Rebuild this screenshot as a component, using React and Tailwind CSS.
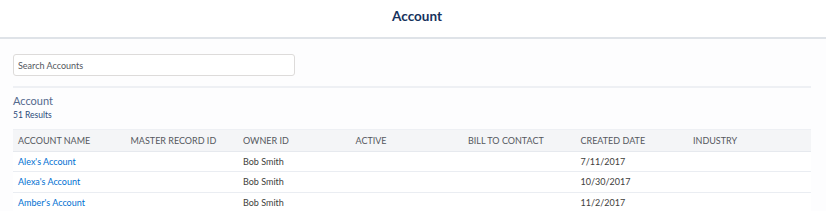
const App = () => {
  const columns = ['Account Name', 'Master Record ID', 'Owner ID', 'Active', 'Bill To Contact', 'Created Date', 'Industry'];

  const rows = [
    { id: 1, name: "Alex's Account", owner: 'Bob Smith', created: '7/11/2017' },
    { id: 2, name: "Alexa's Account", owner: 'Bob Smith', created: '10/30/2017' },
    { id: 3, name: "Amber's Account", owner: 'Bob Smith', created: '11/2/2017' },
  ];

  return (
    <div className="w-[826px] h-[211px] overflow-hidden bg-[#fdfdfe]" style={{ fontFamily: 'Lato, "Open Sans", sans-serif' }}>
      {/* page header */}
      <div className="h-[39px] bg-white border-b-2 border-[#dfe3e8] flex items-center justify-center pl-[8px]">
        <h1 className="text-[13.5px] font-bold text-[#16325c] -mt-[4px]">Account</h1>
      </div>

      <div className="px-[13px] pr-[15px]">
        {/* search */}
        <div className="pt-[15px] pb-[10px] border-b-2 border-[#eef0f4]">
          <input
            type="text"
            placeholder="Search Accounts"
            className="block w-[282px] h-[22px] px-[4px] bg-white border border-[#dddbda] rounded-[3px] text-[9px] text-[#3e3e3c] placeholder:text-[#54585e] outline-none"
          />
        </div>

        {/* results heading */}
        <div className="pt-[5px] pb-[8px] border-b border-[#eef0f4]">
          <div className="text-[11px] leading-[16px] text-[#54698d]">Account</div>
          <div className="text-[8.5px] leading-[12px] text-[#2a4a7a]">51 Results</div>
        </div>

        {/* table */}
        <table className="w-full table-fixed border-collapse text-[9px]">
          <colgroup>
            <col className="w-[112.5px]" />
            <col className="w-[112.5px]" />
            <col className="w-[112.5px]" />
            <col className="w-[112.5px]" />
            <col className="w-[112.5px]" />
            <col className="w-[112.5px]" />
            <col />
          </colgroup>
          <thead>
            <tr className="bg-[#f4f5f7] h-[21px] border-b border-[#e6e9ee]">
              {columns.map((col) => (
                <th key={col} className="text-left font-normal uppercase text-[#54585e] pl-[5px]">
                  {col}
                </th>
              ))}
            </tr>
          </thead>
          <tbody>
            {rows.map((row) => (
              <tr key={row.id} className="h-[20.5px] border-b border-[#eaedf2] bg-white">
                <td className="pl-[5px] text-[#0070d2]">{row.name}</td>
                <td className="pl-[5px]"></td>
                <td className="pl-[5px] text-[#3e3e3c]">{row.owner}</td>
                <td className="pl-[5px]"></td>
                <td className="pl-[5px]"></td>
                <td className="pl-[5px] text-[#3e3e3c]">{row.created}</td>
                <td className="pl-[5px]"></td>
              </tr>
            ))}
          </tbody>
        </table>
      </div>
    </div>
  );
};

export default App;
